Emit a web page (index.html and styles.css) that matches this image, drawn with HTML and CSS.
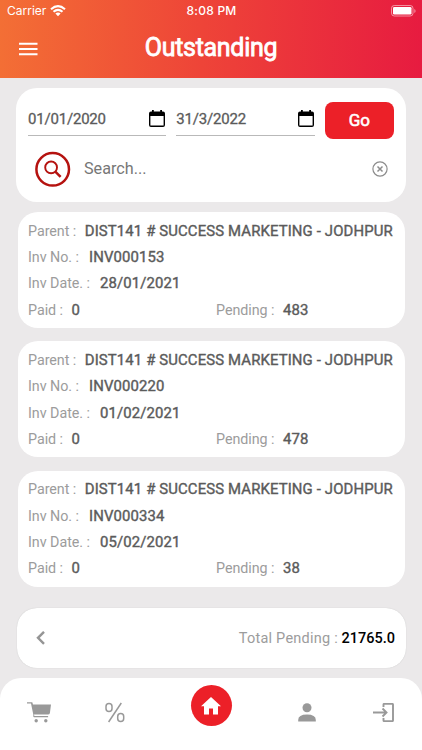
FILE: index.html
```html
<!DOCTYPE html>
<html lang="en">
<head>
<meta charset="utf-8">
<meta name="viewport" content="width=device-width, initial-scale=1">
<title>Outstanding</title>
<link rel="stylesheet" href="styles.css">
</head>
<body>
<div class="app">
  <header class="header">
    <div class="status">
      <div class="carrier"><span>Carrier</span>
        <svg width="16" height="12" viewBox="0 0 16 12" fill="none" stroke="#fff" stroke-width="2.1"><path d="M1 4.2Q8-2 15 4.2M3.5 6.8Q8 2.8 12.5 6.8"/><path d="M5.4 8.5Q8 6.4 10.6 8.5L8 11.2Z" fill="#fff" stroke="none"/></svg>
      </div>
      <time class="clock">8:08 PM</time>
      <svg class="battery" width="25" height="12" viewBox="0 0 25 12"><rect x=".5" y=".5" width="21.5" height="10.5" rx="2.8" fill="none" stroke="#fff" stroke-opacity=".5"/><rect x="2" y="2" width="18.500" height="7.500" rx="1.300" fill="#fff"/><path d="M23.300 4v4q1.300-.6 1.300-2t-1.300-2z" fill="#fff" opacity=".5"/></svg>
    </div>
    <div class="titlebar">
      <svg class="menu" width="19" height="14" viewBox="0 0 19 14" stroke="#fff" stroke-width="2"><path d="M0 1.700h18.500M0 7h18.500M0 12.300h18.500"/></svg>
      <h1>Outstanding</h1>
    </div>
  </header>

  <main class="content">
    <section class="filter">
      <div class="dates">
        <div class="date"><span>01/01/2020</span><svg width="16" height="18" viewBox="0 0 16 18"><path fill-rule="evenodd" d="M3 0h1.800v1.600h6.400V0H13v1.600h1q2 0 2 1.900v11.600q0 1.900-2 1.900H2q-2 0-2-1.900V3.500Q0 1.600 2 1.600h1zM1.400 6v9.600h13.200V6z"/></svg></div>
        <div class="date"><span>31/3/2022</span><svg width="16" height="18" viewBox="0 0 16 18"><path fill-rule="evenodd" d="M3 0h1.800v1.600h6.400V0H13v1.600h1q2 0 2 1.900v11.600q0 1.900-2 1.900H2q-2 0-2-1.900V3.500Q0 1.600 2 1.600h1zM1.400 6v9.600h13.200V6z"/></svg></div>
        <button class="go">Go</button>
      </div>
      <div class="search">
        <svg width="36" height="36" viewBox="0 0 36 36" fill="none" stroke="#b5120f"><circle cx="17.700" cy="18.300" r="16.300" stroke-width="2.500"/><circle cx="16.100" cy="16.400" r="5.900" stroke-width="1.900"/><path d="m20.300 20.600 5.300 5.300" stroke-width="2.500"/></svg>
        <span class="placeholder">Search...</span>
        <svg width="16" height="16" viewBox="0 0 16 16" fill="none" stroke="#8c8c8c"><circle cx="8" cy="8" r="7.100" stroke-width="1.200"/><path d="m5.500 5.500 5 5m0-5-5 5" stroke-width="1.500"/></svg>
      </div>
    </section>

    <article class="invoice">
      <div class="row parent"><span>Parent :</span><b>DIST141 # SUCCESS MARKETING - JODHPUR</b></div>
      <div class="row number"><span>Inv No. :</span><b>INV000153</b></div>
      <div class="row day"><span>Inv Date. :</span><b>28/01/2021</b></div>
      <div class="amounts"><div class="row paid"><span>Paid :</span><b>0</b></div><div class="row pending"><span>Pending :</span><b>483</b></div></div>
    </article>
    <article class="invoice">
      <div class="row parent"><span>Parent :</span><b>DIST141 # SUCCESS MARKETING - JODHPUR</b></div>
      <div class="row number"><span>Inv No. :</span><b>INV000220</b></div>
      <div class="row day"><span>Inv Date. :</span><b>01/02/2021</b></div>
      <div class="amounts"><div class="row paid"><span>Paid :</span><b>0</b></div><div class="row pending"><span>Pending :</span><b>478</b></div></div>
    </article>
    <article class="invoice">
      <div class="row parent"><span>Parent :</span><b>DIST141 # SUCCESS MARKETING - JODHPUR</b></div>
      <div class="row number"><span>Inv No. :</span><b>INV000334</b></div>
      <div class="row day"><span>Inv Date. :</span><b>05/02/2021</b></div>
      <div class="amounts"><div class="row paid"><span>Paid :</span><b>0</b></div><div class="row pending"><span>Pending :</span><b>38</b></div></div>
    </article>

    <section class="total">
      <svg width="9" height="14" viewBox="0 0 9 14" fill="none" stroke="#959595" stroke-width="2.400"><path d="M8 .800 2 6.800l6 6"/></svg>
      <p><span>Total Pending :</span> <b>21765.0</b></p>
    </section>
  </main>

  <nav class="tabs">
    <a class="tab"><svg width="24" height="21" viewBox="0 0 24 21" fill="#999"><path d="M0 .3h5.300l.7 2.100H24L22.900 11q-.2 1.600-2 1.600H7l.4 1.500h13.700v1.200H7q-1.300-.8-.6-2.400L4 1.600H0z"/><circle cx="9.200" cy="18.700" r="1.700"/><circle cx="18.800" cy="18.700" r="1.700"/></svg></a>
    <a class="tab"><svg width="20" height="21" viewBox="0 0 20 21" fill="none" stroke="#999" stroke-width="1.500"><rect x="1" y="1.500" width="6" height="8" rx="3"/><rect x="12.700" y="11.500" width="6" height="8" rx="3"/><path d="M16.300 1 3.600 20"/></svg></a>
    <a class="tab home"><svg width="20" height="18" viewBox="0 0 20 18" fill="#fff"><path d="M10 0 0 9.200h3V17.500h5v-6h4v6h5V9.200h3z"/></svg></a>
    <a class="tab"><svg width="18" height="19" viewBox="0 0 18 19" fill="#999"><circle cx="9" cy="4.700" r="4.500"/><path d="M.2 18.500v-1.500q0-5.500 8.800-5.500t8.800 5.500v1.500z"/></svg></a>
    <a class="tab"><svg width="21" height="19" viewBox="0 0 21 19" fill="none" stroke="#999" stroke-width="1.900"><path d="M10.500 4V1.500q0-.6.600-.6h8.200q.7 0 .7.600v16q0 .6-.7.600h-8.200q-.6 0-.6-.6V15M0 9.500h13M9.500 5.500l4 4-4 4"/></svg></a>
  </nav>
</div>
</body>
</html>
```

FILE: styles.css
```css
* { box-sizing: border-box; }
body { margin: 0; background: #ebe9ea; font-family: Roboto, "Liberation Sans", sans-serif; color: #5b5b5b; }
svg { display: block; flex: none; }
.app { height: 750px; display: flex; flex-direction: column; overflow: hidden; }
.header { height: 77.500px; flex: none; background: linear-gradient(92deg, #f36f35 0%, #ee4438 48%, #e71b40 100%); color: #fff; }
.status { height: 22px; display: grid; grid-template-columns: 1fr auto 1fr; align-items: center; padding: 0 6px 0 7px; font: 12px/22px Inter, sans-serif; }
.carrier { display: flex; gap: 4px; align-items: center; }
.clock { font-weight: 500; letter-spacing: .25px; }
.battery { justify-self: end; }
.titlebar { height: 55px; display: grid; grid-template-columns: 60px 1fr 60px; align-items: center; padding-bottom: 4px; }
.menu { margin: 3px 0 0 19px; }
h1 { margin: 0; text-align: center; font-size: 25px; line-height: 32px; font-weight: 400; letter-spacing: -.3px; -webkit-text-stroke: .8px; }
.content { flex: 1; padding: 10.500px 16px 0; }
.filter { height: 114px; background: #fff; border-radius: 21px; padding: 14px 12px 0; margin-bottom: 10px; }
.dates { display: flex; gap: 10px; }
.date { width: 138.500px; height: 34px; border-bottom: 1px solid #b9b9b9; display: flex; align-items: flex-start; justify-content: space-between; padding: 8px 1px 0 0; font-size: 15px; line-height: 18px; letter-spacing: -.2px; -webkit-text-stroke: .3px; }
.go { width: 69.500px; height: 37px; padding: 0; border: 0; border-radius: 8px; background: #ec2028; color: #fff; font: 400 17px/37px Roboto, sans-serif; letter-spacing: -.2px; -webkit-text-stroke: .6px; }
.search { display: flex; align-items: center; height: 36px; margin-top: 12px; padding: 0 6px 0 7px; }
.placeholder { flex: 1; margin-left: 13px; font-size: 16.200px; line-height: 20px; color: #777; }
.invoice { height: 116px; margin: 0 1.500px 13.300px 1.500px; padding: 5.600px 10.500px 0; border-radius: 20px; background: #fff; }
.row { display: flex; gap: 8.500px; height: 26.400px; line-height: 26.400px; font-size: 14.300px; white-space: nowrap; }
.row span { color: #9c9c9c; letter-spacing: -.04px; }
.row b { font-weight: 400; font-size: 14.900px; letter-spacing: .13px; -webkit-text-stroke: .4px; }
.number, .day { gap: 10px; }
.amounts { display: grid; grid-template-columns: 188px 1fr; }
.total { height: 60px; margin: 21px 0 0 1px; padding: 0 11px 0 19px; border-radius: 20px; background: #fff; box-shadow: 0 0 1px #bbb; display: flex; align-items: center; justify-content: space-between; font-size: 14.500px; }
.total p { margin: 1px 0 0; }
.total span { color: #9c9c9c; letter-spacing: .23px; }
.total b { color: #000; font-weight: 500; }
.tabs { height: 72px; flex: none; background: #fff; border-radius: 21px 21px 0 0; display: grid; grid-template-columns: 77px 76px 1fr 76px 77px; }
.tab { height: 40px; display: flex; align-items: center; justify-content: center; margin-top: 14.500px; }
.home { width: 41px; height: 41px; margin: 7px auto 0; border-radius: 50%; background: #ec2028; }
```
